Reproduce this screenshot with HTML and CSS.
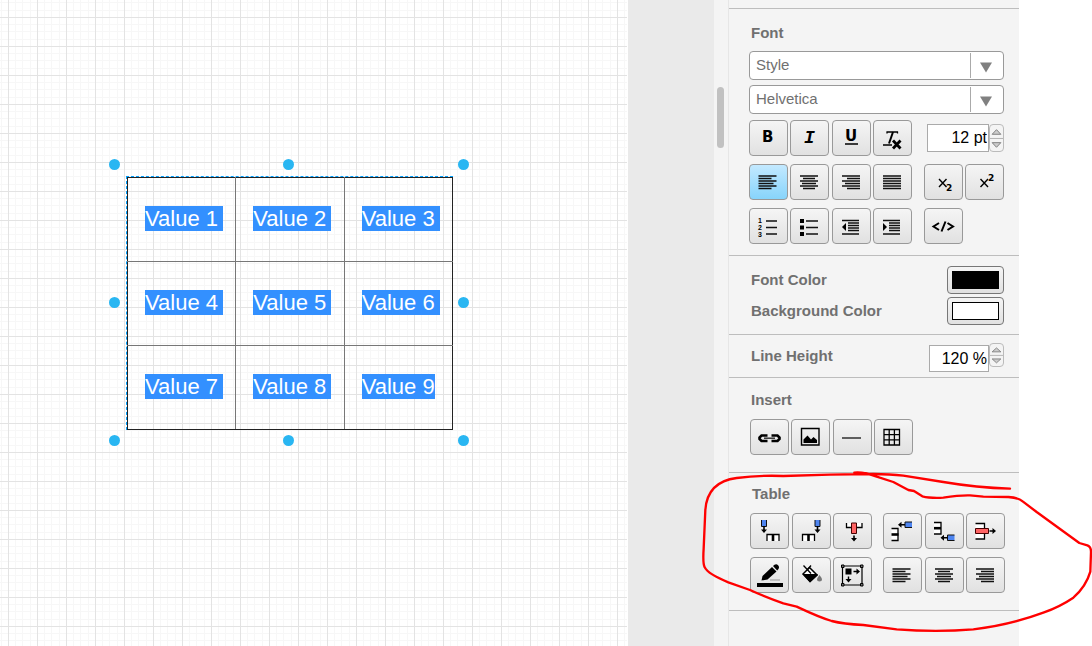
FILE: index.html
```html
<!DOCTYPE html>
<html lang="en">
<head>
<meta charset="utf-8">
<title>Diagram editor</title>
<link rel="stylesheet" href="styles.css">
</head>
<body>
<svg class="defs" aria-hidden="true">
  <symbol id="left" viewBox="0 0 37 34"><path class="rule" d="M8.500 11h18M8.500 13.500h13M8.500 16h18M8.500 18.500h15M8.500 21h18M8.500 23.500h13"/></symbol>
  <symbol id="center" viewBox="0 0 37 34"><path class="rule" d="M9 11h18M12 13.500h12M9 16h18M11 18.500h14M9 21h18M12 23.500h12"/></symbol>
  <symbol id="right" viewBox="0 0 37 34"><path class="rule" d="M9 11h18M14 13.500h13M9 16h18M12 18.500h15M9 21h18M14 23.500h13"/></symbol>
  <symbol id="up" viewBox="0 0 15 28" preserveAspectRatio="none"><path d="M2.500 10L7.500 5L12.500 10Z" fill="#ccc" stroke="#777"/><path d="M2.500 19L7.500 24L12.500 19Z" fill="#ccc" stroke="#777"/><path d="M0 14.500H15" stroke="#aaa"/></symbol>
</svg>
<div class="editor">
  <main class="canvas">
    <div class="node">
      <table class="grid">
        <tr><td><span>Value 1</span></td><td><span>Value 2</span></td><td><span>Value 3</span></td></tr>
        <tr><td><span>Value 4</span></td><td><span>Value 5</span></td><td><span>Value 6</span></td></tr>
        <tr><td><span>Value 7</span></td><td><span>Value 8</span></td><td><span class="last">Value 9</span></td></tr>
      </table>
      <i class="handle n w"></i><i class="handle n c"></i><i class="handle n e"></i>
      <i class="handle m w"></i><i class="handle m e"></i>
      <i class="handle s w"></i><i class="handle s c"></i><i class="handle s e"></i>
    </div>
  </main>
  <div class="gutter"></div>
  <div class="track"><div class="thumb"></div></div>
  <aside class="panel">
    <div class="section lead"></div>

    <section class="section font">
      <h2>Font</h2>
      <div class="pick"><select aria-label="Style"><option>Style</option></select><svg viewBox="0 0 34 27"><path d="M.5 1v25" stroke="#aaa"/><path d="M10 10.500h12l-6 10z" fill="#808080"/></svg></div>
      <div class="pick"><select aria-label="Font family"><option>Helvetica</option></select><svg viewBox="0 0 34 27"><path d="M.5 1v25" stroke="#aaa"/><path d="M10 10.500h12l-6 10z" fill="#808080"/></svg></div>
      <div class="rows">
        <div class="row">
          <div class="group four">
            <button aria-label="Bold"><svg viewBox="0 0 37 34"><text class="heavy" x="12" y="21">B</text></svg></button>
            <button aria-label="Italic"><svg viewBox="0 0 37 34"><text class="slant" x="13" y="22">I</text></svg></button>
            <button aria-label="Underline"><svg viewBox="0 0 37 34"><text class="heavy" x="12" y="20">U</text><path d="M12 23h13" stroke="#000" stroke-width="1.500"/></svg></button>
            <button aria-label="Clear formatting"><svg viewBox="0 0 37 34"><path d="M12.500 11h11.500M13 10.500v2M23.500 10.500v2M9 24h9" fill="none" stroke="#000" stroke-width="1.300"/><path d="M19 11l-4 11.500" stroke="#000" stroke-width="2"/><path d="M19 19.500l7.500 8M26.500 19.500l-7.500 8" stroke="#000" stroke-width="2.800"/></svg></button>
          </div>
          <div class="number size"><input aria-label="Font size" value="12 pt"><button class="spin" aria-label="Change font size"><svg><use href="#up"/></svg></button></div>
        </div>
        <div class="row">
          <div class="group four">
            <button class="on" aria-label="Align left"><svg><use href="#left"/></svg></button>
            <button aria-label="Align center"><svg><use href="#center"/></svg></button>
            <button aria-label="Align right"><svg><use href="#right"/></svg></button>
            <button aria-label="Justify"><svg viewBox="0 0 37 34"><path class="rule" d="M9 11h18M9 13.500h18M9 16h18M9 18.500h18M9 21h18M9 23.500h18"/></svg></button>
          </div>
          <div class="group two">
            <button aria-label="Subscript"><svg viewBox="0 0 37 34"><path d="M14 14l7.500 8M21.500 14l-7.500 8" stroke="#000" stroke-width="1.400"/><text class="tiny" x="21" y="26">2</text></svg></button>
            <button aria-label="Superscript"><svg viewBox="0 0 37 34"><path d="M14.500 14l7.500 8M22 14l-7.500 8" stroke="#000" stroke-width="1.400"/><text class="tiny" x="22" y="16">2</text></svg></button>
          </div>
        </div>
        <div class="row">
          <div class="group four">
            <button aria-label="Numbered list"><svg viewBox="0 0 37 34"><path class="rule" d="M16 12h11M16 18.500h11M16 25h11"/><text class="digit" x="8" y="14">1</text><text class="digit" x="8" y="21">2</text><text class="digit" x="8" y="28">3</text></svg></button>
            <button aria-label="Bulleted list"><svg viewBox="0 0 37 34"><path class="rule" d="M15 12h12M15 18.500h12M15 25h12"/><path d="M9 10h4v4h-4zM9 16.500h4v4h-4zM9 23h4v4h-4z"/></svg></button>
            <button aria-label="Outdent"><svg viewBox="0 0 37 34"><path class="rule" d="M9 11.500h17M15 14h11M15 16.500h11M15 19h11M15 21.500h11M9 25h17"/><path d="M9 18l4-4v8z"/></svg></button>
            <button aria-label="Indent"><svg viewBox="0 0 37 34"><path class="rule" d="M9 11.500h17M15 14h11M15 16.500h11M15 19h11M15 21.500h11M9 25h17"/><path d="M13 18l-4-4v8z"/></svg></button>
          </div>
          <div class="group two">
            <button aria-label="HTML"><svg viewBox="0 0 37 34"><path d="M14 14l-5.500 3.500 5.500 3.500M22.500 14l5.500 3.500-5.500 3.500M20.500 12.500l-4 10" fill="none" stroke="#000" stroke-width="2"/></svg></button>
          </div>
        </div>
      </div>
    </section>

    <section class="section colors">
      <div class="row"><h2 id="fc">Font Color</h2><button class="swatch" aria-labelledby="fc"><span class="chip ink"></span></button></div>
      <div class="row"><h2 id="bc">Background Color</h2><button class="swatch" aria-labelledby="bc"><span class="chip"></span></button></div>
    </section>

    <section class="section leading">
      <div class="row"><h2><label for="lh">Line Height</label></h2><div class="number"><input id="lh" value="120 %"><button class="spin" aria-label="Change line height"><svg><use href="#up"/></svg></button></div></div>
    </section>

    <section class="section insert">
      <h2>Insert</h2>
      <div class="group four">
        <button aria-label="Link"><svg viewBox="0 0 37 34"><path d="M16.500 15.500h-6l-2 2v1.500l2 2h6M20.500 15.500h6l2 2v1.500l-2 2h-6" fill="none" stroke="#000" stroke-width="2.600"/><path d="M13 18.200h11" stroke="#333" stroke-width="1.500"/></svg></button>
        <button aria-label="Image"><svg viewBox="0 0 37 34"><path d="M9.500 8.500h17.500v16.500h-17.500z" fill="none" stroke="#000" stroke-width="1.400"/><path d="M11.500 23v-3.500l4-4 3.500 4 2.500-2.500 3.500 3v3z"/></svg></button>
        <button aria-label="Horizontal rule"><svg viewBox="0 0 37 34"><path d="M8 18h19" stroke="#111" stroke-width="1.300"/></svg></button>
        <button aria-label="Table"><svg viewBox="0 0 37 34"><path d="M9 9.500h15.500v15.500h-15.500zM14.200 9v16M19.400 9v16M9 14.700h16M9 19.900h16" fill="none" stroke="#000" stroke-width="1.300"/></svg></button>
      </div>
    </section>

    <section class="section table">
      <h2>Table</h2>
      <div class="rows">
        <div class="row">
          <div class="group three">
            <button aria-label="Insert column before"><svg viewBox="0 0 37 34"><path class="blank" d="M16 27v-6.500h12v6.500"/><path class="core" d="M22 20v7"/><path class="blue" d="M10.500 6v6.500h5v-6.500"/><path d="M12.200 12h1.600v3.500h2.200l-3 3.500-3-3.500h2.200z"/></svg></button>
            <button aria-label="Insert column after"><svg viewBox="0 0 37 34"><path class="blank" d="M9.500 27v-6.500h12v6.500"/><path class="core" d="M15.500 20v7"/><path class="blue" d="M22 6v6.500h5v-6.500"/><path d="M23.700 12h1.600v3.500h2.200l-3 3.500-3-3.500h2.200z"/></svg></button>
            <button aria-label="Delete column"><svg viewBox="0 0 37 34"><path class="blank" d="M12.500 9v4.500h15.500v-4.500"/><path class="red" d="M17.500 9v10.500h5v-10.500z"/><path d="M19.200 21.500h1.600v2.500h2.200l-3 3.500-3-3.500h2.200z"/></svg></button>
          </div>
          <div class="group three">
            <button aria-label="Insert row before"><svg viewBox="0 0 37 34"><path class="blank" d="M7.500 14.500h6.500v12h-6.500"/><path class="core" d="M7.500 20.500h7"/><path class="blue" d="M28 8h-7v5.500h7"/><path d="M21 11.500h-3.500v2.200l-3.500-3 3.500-3v2.200h3.500z"/></svg></button>
            <button aria-label="Insert row after"><svg viewBox="0 0 37 34"><path class="blank" d="M8 8.500h7v11.500h-7"/><path class="core" d="M8 14.200h7"/><path class="blue" d="M28.500 21h-7v5.500h7"/><path d="M21.500 24.500h-3.500v2.200l-3.500-3 3.500-3v2.200h3.500z"/></svg></button>
            <button aria-label="Delete row"><svg viewBox="0 0 37 34"><path class="blank" d="M8.500 9.500h9v15.500h-9"/><path class="red" d="M8.500 14.500h13v5h-13z"/><path d="M22.500 16.200h3v-2.200l3.500 3-3.500 3v-2.200h-3z"/></svg></button>
          </div>
        </div>
        <div class="row">
          <div class="group three">
            <button aria-label="Border color"><svg viewBox="0 0 37 34"><path d="M6 25h26v4h-26zM10.500 22.500l1-4.500 9.500-9 4.500 4.500-9 8zM22 8l1.500-1.200q2-1.200 3.600.5t.4 3.800l-1.300 1.500z"/><path d="M19 22h10" stroke="#999"/></svg></button>
            <button aria-label="Fill color"><svg viewBox="0 0 37 34"><path d="M10 16l6.500-6.500 7.500 7.500-7 6.500z" fill="#fff" stroke="#000" stroke-width="1.500"/><path d="M9.500 16h14.500l1 1-8 7.500z"/><path d="M10.500 7.500l7.500 8M14.500 11.500l3.500-4" stroke="#000" stroke-width="1.300"/><path d="M26.500 17q-5 6 0 6.500 5-.5 0-6.500z" fill="#777"/></svg></button>
            <button aria-label="Spacing"><svg viewBox="0 0 37 34"><path d="M8.500 8h19.500v19h-19.500z" fill="none" stroke="#000" stroke-width="1.200"/><path d="M7.500 7h2.500v2.500h-2.500zM26.500 7h2.500v2.500h-2.500zM7.500 25.500h2.500v2.500h-2.500zM26.500 25.500h2.500v2.500h-2.500z" fill="#777" stroke="#000"/><path d="M11.500 10.500h6v6h-6zM19.500 12.800h3v-2.300l3.500 3-3.500 3v-2.300h-3zM13.800 18.500h1.400v2.500h2.300l-3 3.500-3-3.500h2.300z"/></svg></button>
          </div>
          <div class="group three">
            <button aria-label="Align table left"><svg><use href="#left"/></svg></button>
            <button aria-label="Align table center"><svg><use href="#center"/></svg></button>
            <button aria-label="Align table right"><svg><use href="#right"/></svg></button>
          </div>
        </div>
      </div>
    </section>
  </aside>
  <svg class="scribble" viewBox="0 0 1206 558" aria-hidden="true"><path d="M493 38Q520 35 560 50L610 66L655 90L672 93L697 109Q720 115 760 113Q810 105 840 106L880 110L955 111Q985 113 998 124L1040 156L1168 249L1192 256Q1203 260 1203 275L1201 335Q1188 380 1150 413Q1110 440 1060 458Q960 495 850 508Q740 517 620 508L520 495Q460 492 425 483Q390 473 320 440L280 430Q230 413 180 390L115 367Q55 343 44 322Q38 310 41 265L46 150Q52 65 140 54Q210 45 280 48L420 44L550 42Q600 42 640 47L760 66Q860 83 960 86"/></svg>
</div>
</body>
</html>
```
FILE: styles.css
```css
* { box-sizing: border-box; }
body { margin: 0; background: #fff; font-family: "Liberation Sans", Arial, sans-serif; }
.defs { position: absolute; width: 0; height: 0; }
.editor { position: relative; display: flex; min-height: 100vh; padding-right: 73px; overflow: hidden; }

/* drawing surface */
.canvas {
  position: relative;
  flex: 1;
  border-right: 1px solid #fff;
  background-color: #fff;
  background-image:
    linear-gradient(90deg, #e3e3e3 1px, transparent 1px),
    linear-gradient(#e3e3e3 1px, transparent 1px),
    linear-gradient(90deg, transparent 7px, #f7f7f7 7px, #f7f7f7 8px, transparent 8px, transparent 14px, #f7f7f7 14px, #f7f7f7 15px, transparent 15px, transparent 22px, #f7f7f7 22px, #f7f7f7 23px, transparent 23px),
    linear-gradient(transparent 7px, #f7f7f7 7px, #f7f7f7 8px, transparent 8px, transparent 14px, #f7f7f7 14px, #f7f7f7 15px, transparent 15px, transparent 22px, #f7f7f7 22px, #f7f7f7 23px, transparent 23px);
  background-size: 29px 29px;
  background-position: 8px 17px;
}
.node { position: absolute; left: 126px; top: 176px; border: 1px dashed #00a0ff; border-right: 0; border-bottom: 0; }
.grid { width: 326px; table-layout: fixed; border-collapse: collapse; border: 1px solid #222; color: #fff; font-size: 22px; line-height: 25px; }
.grid td { height: 84px; padding: 0 0 2px 17px; border: 1px solid #777; }
.grid tr:first-child td { border-top-color: #222; }
.grid tr:last-child td { border-bottom-color: #222; }
.grid td:first-child { border-left-color: #222; }
.grid td:last-child { border-right-color: #222; }
.grid span { display: inline-block; padding-right: 5px; background: #3390ff; }
.grid .last { padding-right: 0; }
.handle { position: absolute; width: 11px; height: 11px; margin: -5px; border-radius: 50%; background: #29b6f2; }
.n { top: -13px; } .m { top: calc(50% - 2px); } .s { top: calc(100% + 10px); }
.w { left: -13px; } .c { left: calc(50% - 2px); } .e { left: calc(100% + 10px); }

.gutter { width: 86px; background: #eaeaea; }
.track { width: 15px; padding: 87px 0 0 3px; background: #f4f4f4; border-right: 1px solid #e6e6e6; }
.thumb { width: 7px; height: 61px; border-radius: 4px; background: #c1c1c1; }

/* format panel */
.panel { width: 290px; background: #f4f4f4; }
.section { padding: 0 15px 0 20px; border-bottom: 1px solid #bdbdbd; }
.lead { height: 9px; }
.font { padding-top: 15px; padding-bottom: 11px; }
.colors { padding-top: 10px; padding-bottom: 9px; display: grid; gap: 3px; }
.leading { padding-top: 8px; padding-bottom: 5px; }
.insert { padding: 13px 14px 17px 21px; }
.table { padding: 12px 14px 17px 21px; }
h2 { margin: 0 0 9px 2px; font-size: 15px; line-height: 18px; color: #707070; }
.insert h2, .table h2 { margin-bottom: 10px; }
.insert h2 { margin-left: 1px; }
.colors h2 { margin-bottom: 0; }
.leading h2 { margin-top: 4px; margin-bottom: 0; }
.leading .row { align-items: flex-start; }
.rows { display: grid; gap: 8px; }
.font .rows { margin-top: 6px; }
.row { display: flex; justify-content: space-between; align-items: center; }
.group { display: flex; justify-content: space-between; }
.four { width: 163px; } .three { width: 122px; } .two { width: 80px; }

.pick { position: relative; height: 29px; }
.pick + .pick { margin-top: 5px; }
.pick select { appearance: none; width: 100%; height: 29px; padding: 0 36px 2px 6px; border: 1px solid #999; border-radius: 4px; background: #fff; color: #707070; font: 15px "Liberation Sans", Arial, sans-serif; }
.pick svg { position: absolute; right: 0; top: 1px; width: 34px; height: 27px; pointer-events: none; }

button { padding: 0; border: 1px solid #999; border-radius: 4px; background: linear-gradient(#f5f5f5, #e1e1e1); }
.group button { width: 39px; height: 36px; }
.group svg { display: block; width: 37px; height: 34px; }
.group .on { background: linear-gradient(#c3e9ff, #87d4fb); }
.rule { fill: none; stroke: #111; stroke-width: 1.3px; }
.blank { fill: #fff; stroke: #000; stroke-width: 1.3px; }
.core { fill: none; stroke: #000; stroke-width: 2.6px; }
.blue { fill: #4d84f0; stroke: #111; }
.red { fill: #ff6464; stroke: #400; }
.heavy { font: bold 15px "DejaVu Sans", sans-serif; }
.slant { font: italic bold 18px "Liberation Mono", monospace; }
.tiny { font: bold 9px "DejaVu Sans", sans-serif; }
.digit { font: bold 7px "Liberation Sans", sans-serif; }

.number { display: flex; align-items: flex-start; }
.number input { width: 60px; height: 27px; margin-top: 2px; padding: 0 1px 0 0; border: 1px solid #aaa; border-radius: 0; background: #fff; color: #000; text-align: right; font: 16px "Liberation Sans", Arial, sans-serif; }
.size input { width: 62px; height: 28px; margin-top: 0; }
.number .spin { width: 15px; height: 24px; border-color: #bbb; background: #f4f4f4; }
.size .spin { height: 28px; }
.spin svg { display: block; width: 100%; height: 100%; }

.swatch { width: 57px; height: 28px; padding: 4px; border-color: #777; }
.chip { display: block; height: 18px; border: 1px solid #000; background: #fff; }
.ink { background: #000; }

/* freehand annotation over the page */
.scribble { position: absolute; right: 0; top: 460px; width: 402px; height: 186px; pointer-events: none; }
.scribble path { fill: none; stroke: #f00; stroke-width: 7px; stroke-linecap: round; stroke-linejoin: round; }
```
